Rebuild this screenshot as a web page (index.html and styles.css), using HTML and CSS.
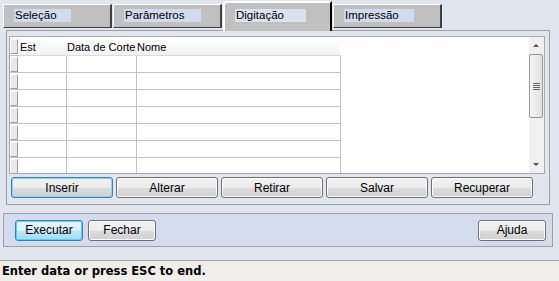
FILE: index.html
```html
<!DOCTYPE html>
<html lang="pt">
<head>
  <meta charset="UTF-8">
  <title>Digitação</title>
  <link rel="stylesheet" href="styles.css">
</head>
<body>
  <div class="window">
    <div class="tabs">
      <div class="tab"><span class="label">Seleção</span></div>
      <div class="tab"><span class="label">Parâmetros</span></div>
      <div class="tab active"><span class="label">Digitação</span></div>
      <div class="tab"><span class="label">Impressão</span></div>
    </div>
    <div class="page">
      <div class="grid">
        <div class="gridBody">
          <table class="cells">
            <tr class="head">
              <td class="rh"><span></span></td>
              <td class="c1">Est</td>
              <td class="c2">Data de Corte</td>
              <td class="c3">Nome</td>
            </tr>
            <tr><td class="rh"><span></span></td><td></td><td></td><td></td></tr>
            <tr><td class="rh"><span></span></td><td></td><td></td><td></td></tr>
            <tr><td class="rh"><span></span></td><td></td><td></td><td></td></tr>
            <tr><td class="rh"><span></span></td><td></td><td></td><td></td></tr>
            <tr><td class="rh"><span></span></td><td></td><td></td><td></td></tr>
            <tr><td class="rh"><span></span></td><td></td><td></td><td></td></tr>
            <tr><td class="rh"><span></span></td><td></td><td></td><td></td></tr>
          </table>
        </div>
        <div class="scroll">
          <div class="arrow up"></div>
          <div class="thumb"><i></i><i></i><i></i><i></i></div>
          <div class="track"></div>
          <div class="arrow down"></div>
        </div>
      </div>
      <div class="actions">
        <button class="btn focus">Inserir</button>
        <button class="btn">Alterar</button>
        <button class="btn">Retirar</button>
        <button class="btn">Salvar</button>
        <button class="btn">Recuperar</button>
      </div>
    </div>
    <div class="footer">
      <button class="btn small focus">Executar</button>
      <button class="btn small">Fechar</button>
      <div class="spacer"></div>
      <button class="btn small">Ajuda</button>
    </div>
  </div>
  <div class="status">Enter data or press ESC to end.</div>
</body>
</html>
```
FILE: styles.css
```css
* {
  padding: 0;
  margin: 0;
  box-sizing: border-box;
}
body {
  width: 559px;
  height: 281px;
  background: #e1e5ee;
  font-family: "Liberation Sans", Arial, sans-serif;
  font-size: 11px;
  color: #000;
  overflow: hidden;
}
.window {
  height: 260px;
}
.tabs {
  display: flex;
  align-items: flex-end;
  height: 31px;
  padding-left: 3px;
  position: relative;
  z-index: 1;
}
.tabs .tab {
  width: 109px;
  height: 24px;
  margin-bottom: 3px;
  margin-right: 1px;
  background: #c0c0c0;
  border-top: 1px solid #fff;
  border-left: 1px solid #fff;
  border-right: 2px solid #404040;
  border-bottom: 1px solid #404040;
  padding: 4px 0 0 10px;
  font-size: 11.5px;
}
.tabs .tab .label {
  display: block;
  width: 57px;
  height: 13px;
  line-height: 13px;
  padding-left: 1px;
  background: #d2dbeb;
}
.tabs .tab:nth-child(2) .label {
  width: 77px;
}
.tabs .tab:nth-child(4) .label {
  width: 70px;
}
.tabs .tab.active {
  height: 30px;
  margin-bottom: 0;
  border-top: 2px solid #fff;
  border-left: 2px solid #fff;
  border-right: 2px solid #000;
  border-bottom: 0;
  border-top-left-radius: 4px;
  padding-top: 6px;
}
.tabs .tab.active .label {
  width: 71px;
  background: #dde3ee;
}
.page {
  margin: -1px 9px 0 6px;
  height: 175px;
  border: 1px solid #a0a0a0;
  padding: 5px 4px 0 2px;
}
.grid {
  display: flex;
  height: 138px;
  border: 1px solid #a9a9a9;
  background: #fff;
}
.gridBody {
  flex: 1;
  overflow: hidden;
}
.cells {
  border-collapse: collapse;
  table-layout: fixed;
  width: 330px;
}
.cells td {
  height: 17px;
  border-bottom: 1px solid #c4c4c4;
  border-right: 1px solid #c4c4c4;
  padding: 0 1px;
  white-space: nowrap;
  overflow: hidden;
  text-overflow: clip;
}
.cells .head td {
  height: 18px;
  padding-top: 2px;
  background: linear-gradient(#fff, #f1f2f4);
  border-right: 0;
  border-bottom: 1px solid #dcdcdc;
}
.cells .c1 {
  width: 47px;
}
.cells .c2 {
  width: 70px;
}
.cells .c3 {
  width: 204px;
}
.cells td.rh {
  width: 9px;
  padding: 1px 0 0 0;
  border-right: 0;
  border-bottom: 1px solid #c4c4c4;
  background: #fff;
}
.cells td.rh span {
  display: block;
  width: 8px;
  height: 15px;
  background: #e8e8e8;
  border-top: 1px solid #fff;
  border-left: 1px solid #fff;
  border-right: 1px solid #a0a0a0;
  border-bottom: 1px solid #a0a0a0;
}
.cells .head td.rh {
  background: #fff;
}
.scroll {
  width: 15px;
  display: flex;
  flex-direction: column;
  background: #f0f0f0;
}
.scroll .arrow {
  height: 17px;
  position: relative;
}
.scroll .arrow::after {
  content: '';
  position: absolute;
  left: 4px;
  width: 0;
  height: 0;
  border-left: 3px solid transparent;
  border-right: 3px solid transparent;
}
.scroll .up::after {
  top: 7px;
  border-bottom: 3px solid #505050;
}
.scroll .down::after {
  top: 7px;
  border-top: 3px solid #505050;
}
.scroll .thumb {
  height: 64px;
  margin: 0 1px 0 0;
  border: 1px solid #989898;
  border-radius: 2px;
  background: linear-gradient(90deg, #f4f4f4, #e2e2e2);
  display: flex;
  flex-direction: column;
  justify-content: center;
  align-items: center;
  gap: 1px;
}
.scroll .thumb i {
  display: block;
  width: 7px;
  height: 1px;
  background: #666;
}
.scroll .track {
  flex: 1;
}
.actions {
  display: flex;
  gap: 3px;
  padding: 3px 0 0 2px;
}
.btn {
  width: 102px;
  height: 21px;
  font-family: "Liberation Sans", Arial, sans-serif;
  font-size: 12px;
  color: #000;
  border: 1px solid #707070;
  border-radius: 3px;
  background: linear-gradient(#f3f3f3 0%, #ebebeb 50%, #dddddd 51%, #cfcfcf 100%);
  box-shadow: inset 0 0 0 1px #fcfcfc;
}
.btn.focus {
  border-color: #3c7fb1;
  background: linear-gradient(#eaf6fd 0%, #d9f0fc 50%, #bee6fd 51%, #a7d9f5 100%);
  box-shadow: inset 0 0 0 1px #48d8fb;
}
.actions .btn.focus {
  background: linear-gradient(#f3f3f3 0%, #ebebeb 50%, #dddddd 51%, #cfcfcf 100%);
  box-shadow: inset 0 0 0 1px #8cd3f4;
}
.footer {
  display: flex;
  align-items: center;
  gap: 5px;
  height: 34px;
  margin: 8px 6px 0 3px;
  padding: 0 6px 0 11px;
  background: #d3dbec;
  border: 1px solid #a0a0a0;
}
.footer .btn.small {
  width: 68px;
}
.footer .spacer {
  flex: 1;
}
.status {
  height: 21px;
  border-top: 1px solid #a0a0a0;
  background: #f0eeeb;
  padding: 3px 0 0 2px;
  font-family: "DejaVu Sans", Verdana, sans-serif;
  font-size: 11.5px;
  font-weight: bold;
  line-height: 15px;
}
```
